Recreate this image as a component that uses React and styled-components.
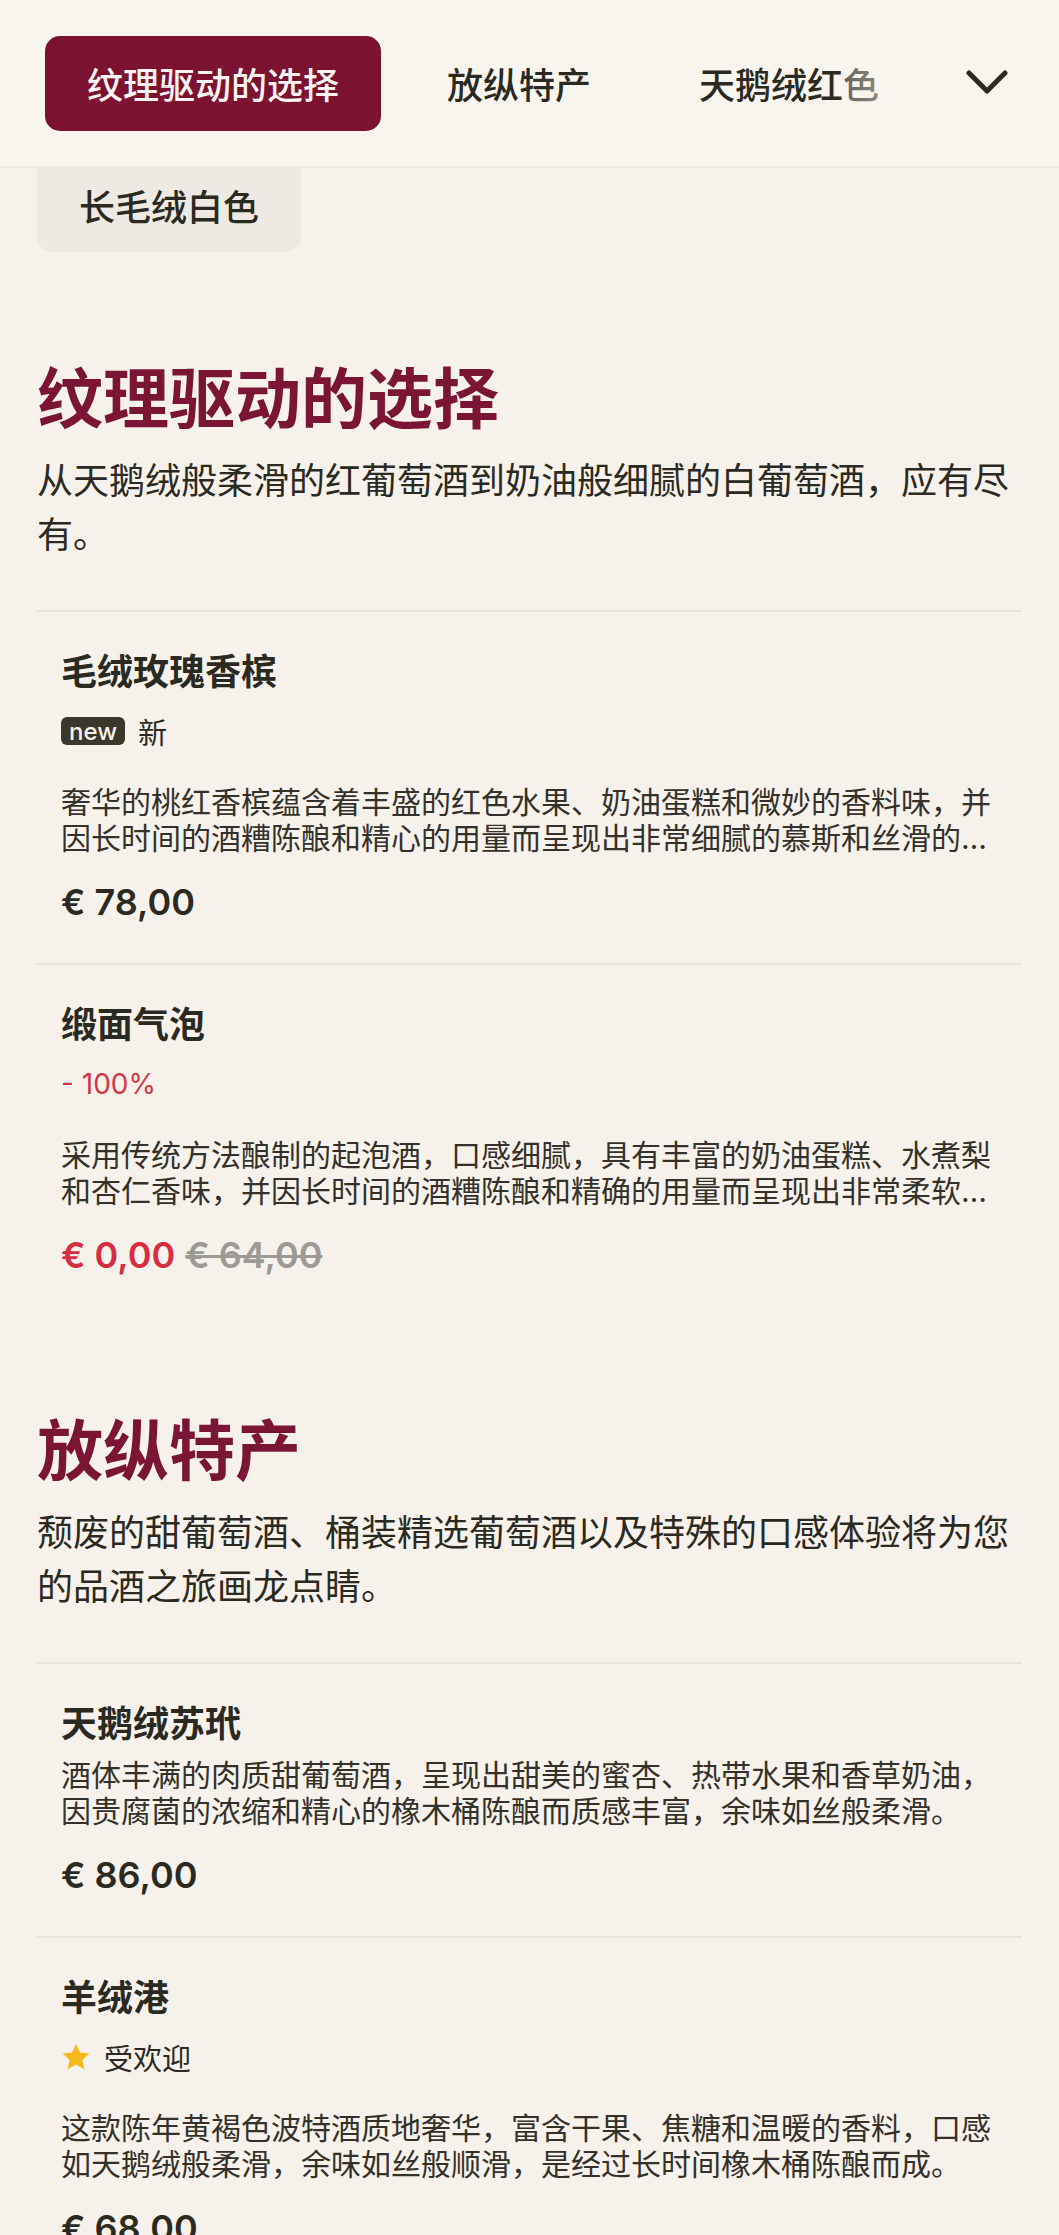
import React from "react";
import styled, { createGlobalStyle } from "styled-components";

const GlobalStyle = createGlobalStyle`
  * { box-sizing: border-box; }
  html, body { margin: 0; padding: 0; }
  body {
    background: #f6f2eb;
    font-family: Inter, "Noto Sans CJK SC", "Noto Sans", sans-serif;
    color: #2b2a22;
    -webkit-font-smoothing: antialiased;
  }
`;

const Page = styled.div`
  min-height: 2235px;
  background: #f6f2eb;
`;

const Header = styled.header`
  position: sticky;
  top: 0;
  z-index: 10;
  height: 168px;
  display: flex;
  align-items: center;
  padding-left: 45px;
  padding-right: 30px;
  background: #f8f5ef;
  border-bottom: 2px solid #ece7e0;
`;

const TabsScroll = styled.nav`
  position: relative;
  flex: 1;
  min-width: 0;
  display: flex;
  gap: 24px;
  overflow: hidden;

  &::after {
    content: "";
    position: absolute;
    top: 0;
    right: 0;
    bottom: 0;
    width: 106px;
    background: linear-gradient(
      to right,
      rgba(248, 245, 239, 0) 0px,
      rgba(248, 245, 239, 0.3) 8px,
      rgba(248, 245, 239, 0.45) 40px,
      #f8f5ef 100%
    );
    pointer-events: none;
  }
`;

const Tab = styled.button`
  flex-shrink: 0;
  height: 95px;
  padding: 0 42px;
  border: none;
  border-radius: 15px;
  display: flex;
  align-items: center;
  font-family: inherit;
  font-size: 36px;
  font-weight: 500;
  background: ${(p) => (p.$active ? "#7b1330" : "transparent")};
  color: ${(p) => (p.$active ? "#fbf3f4" : "#2b2a22")};
`;

const ChevronButton = styled.button`
  width: 84px;
  height: 84px;
  flex-shrink: 0;
  border: none;
  background: transparent;
  display: flex;
  align-items: center;
  justify-content: center;
  padding: 0;
`;

const ChipRow = styled.div`
  display: flex;
  gap: 24px;
  margin-top: -11px;
  padding: 0 37px 12px;
`;

const Chip = styled.button`
  height: 95px;
  padding: 0 42px;
  border: none;
  border-radius: 15px;
  display: flex;
  align-items: center;
  background: #efe9e3;
  color: #2b2a22;
  font-family: inherit;
  font-size: 36px;
  font-weight: 500;
`;

const Section = styled.section`
  padding: 96px 37px 0;
`;

const SectionHead = styled.div`
  padding-bottom: 48px;
`;

const Headline = styled.h2`
  margin: 0;
  font-size: 66px;
  line-height: 79px;
  font-weight: 700;
  color: #7a1535;
`;

const Lead = styled.p`
  margin: 15px 0 0;
  font-size: 36px;
  line-height: 54px;
  color: #2b2a22;
`;

const Item = styled.article`
  border-top: 2px solid #e9e4dd;
  padding: 35px 24px 38px;
`;

const ItemTitle = styled.h3`
  margin: 0;
  font-size: 36px;
  line-height: 50px;
  font-weight: 700;
  color: #2b2a22;
`;

const BadgeRow = styled.div`
  display: flex;
  align-items: center;
  gap: 13px;
  height: 28px;
  margin: 20px 0 39px;
  font-size: 29px;
  color: #2b2a22;
`;

const NewTag = styled.span`
  display: inline-flex;
  align-items: center;
  height: 28px;
  padding: 0 8px;
  border-radius: 6px;
  background: #3b372d;
  color: #f6f2eb;
  font-family: Inter, sans-serif;
  font-size: 24px;
  font-weight: 500;
`;

const Discount = styled.span`
  color: #d53649;
  font-size: 28px;
`;

const Desc = styled.p`
  margin: 8px 0 0;
  font-size: 30px;
  line-height: 36px;
  color: #33312a;
  display: -webkit-box;
  -webkit-line-clamp: 2;
  -webkit-box-orient: vertical;
  overflow: hidden;
`;

const PriceRow = styled.div`
  display: flex;
  gap: 10px;
  margin-top: 24px;
  font-size: 36px;
  line-height: 45px;
  font-weight: 600;
`;

const Price = styled.span`
  color: ${(p) => (p.$sale ? "#d62e40" : "#2b2a22")};
`;

const OldPrice = styled.span`
  color: #9b9a95;
  text-decoration: line-through;
  text-decoration-thickness: 3px;
`;

const Star = () => (
  <svg width="30" height="28" viewBox="0 0 24 23" aria-hidden="true">
    <path
      d="M12 0.8l3.3 7.1 7.7 0.8-5.8 5.2 1.7 7.6L12 17.6l-6.9 3.9 1.7-7.6L1 8.7l7.7-0.8z"
      fill="#f6b91c"
    />
  </svg>
);

const Chevron = () => (
  <svg width="42" height="26" viewBox="0 0 42 26" aria-hidden="true">
    <polyline
      points="3,3 21,21 39,3"
      fill="none"
      stroke="#2b2a22"
      strokeWidth="5"
      strokeLinecap="round"
      strokeLinejoin="round"
    />
  </svg>
);

const sections = [
  {
    title: "纹理驱动的选择",
    lead: "从天鹅绒般柔滑的红葡萄酒到奶油般细腻的白葡萄酒，应有尽有。",
    items: [
      {
        name: "毛绒玫瑰香槟",
        badge: { type: "new", label: "新" },
        desc: "奢华的桃红香槟蕴含着丰盛的红色水果、奶油蛋糕和微妙的香料味，并因长时间的酒糟陈酿和精心的用量而呈现出非常细腻的慕斯和丝滑的口感，余味悠长。",
        price: "€ 78,00",
      },
      {
        name: "缎面气泡",
        badge: { type: "discount", label: "- 100%" },
        desc: "采用传统方法酿制的起泡酒，口感细腻，具有丰富的奶油蛋糕、水煮梨和杏仁香味，并因长时间的酒糟陈酿和精确的用量而呈现出非常柔软细腻的气泡。",
        price: "€ 0,00",
        oldPrice: "€ 64,00",
      },
    ],
  },
  {
    title: "放纵特产",
    lead: "颓废的甜葡萄酒、桶装精选葡萄酒以及特殊的口感体验将为您的品酒之旅画龙点睛。",
    items: [
      {
        name: "天鹅绒苏玳",
        desc: "酒体丰满的肉质甜葡萄酒，呈现出甜美的蜜杏、热带水果和香草奶油，因贵腐菌的浓缩和精心的橡木桶陈酿而质感丰富，余味如丝般柔滑。",
        price: "€ 86,00",
      },
      {
        name: "羊绒港",
        badge: { type: "popular", label: "受欢迎" },
        desc: "这款陈年黄褐色波特酒质地奢华，富含干果、焦糖和温暖的香料，口感如天鹅绒般柔滑，余味如丝般顺滑，是经过长时间橡木桶陈酿而成。",
        price: "€ 68,00",
      },
    ],
  },
];

const Badge = ({ badge }) => {
  if (!badge) return null;
  if (badge.type === "new")
    return (
      <BadgeRow>
        <NewTag>new</NewTag>
        <span>{badge.label}</span>
      </BadgeRow>
    );
  if (badge.type === "discount")
    return (
      <BadgeRow>
        <Discount>{badge.label}</Discount>
      </BadgeRow>
    );
  return (
    <BadgeRow>
      <Star />
      <span>{badge.label}</span>
    </BadgeRow>
  );
};

export default function App() {
  return (
    <Page>
      <GlobalStyle />
      <Header>
        <TabsScroll>
          <Tab $active>纹理驱动的选择</Tab>
          <Tab>放纵特产</Tab>
          <Tab>天鹅绒红色</Tab>
          <Tab>长毛绒白色</Tab>
        </TabsScroll>
        <ChevronButton aria-label="更多">
          <Chevron />
        </ChevronButton>
      </Header>
      <ChipRow>
        <Chip>长毛绒白色</Chip>
      </ChipRow>
      {sections.map((s) => (
        <Section key={s.title}>
          <SectionHead>
            <Headline>{s.title}</Headline>
            <Lead>{s.lead}</Lead>
          </SectionHead>
          {s.items.map((it) => (
            <Item key={it.name}>
              <ItemTitle>{it.name}</ItemTitle>
              <Badge badge={it.badge} />
              <Desc>{it.desc}</Desc>
              <PriceRow>
                <Price $sale={!!it.oldPrice}>{it.price}</Price>
                {it.oldPrice && <OldPrice>{it.oldPrice}</OldPrice>}
              </PriceRow>
            </Item>
          ))}
        </Section>
      ))}
    </Page>
  );
}
